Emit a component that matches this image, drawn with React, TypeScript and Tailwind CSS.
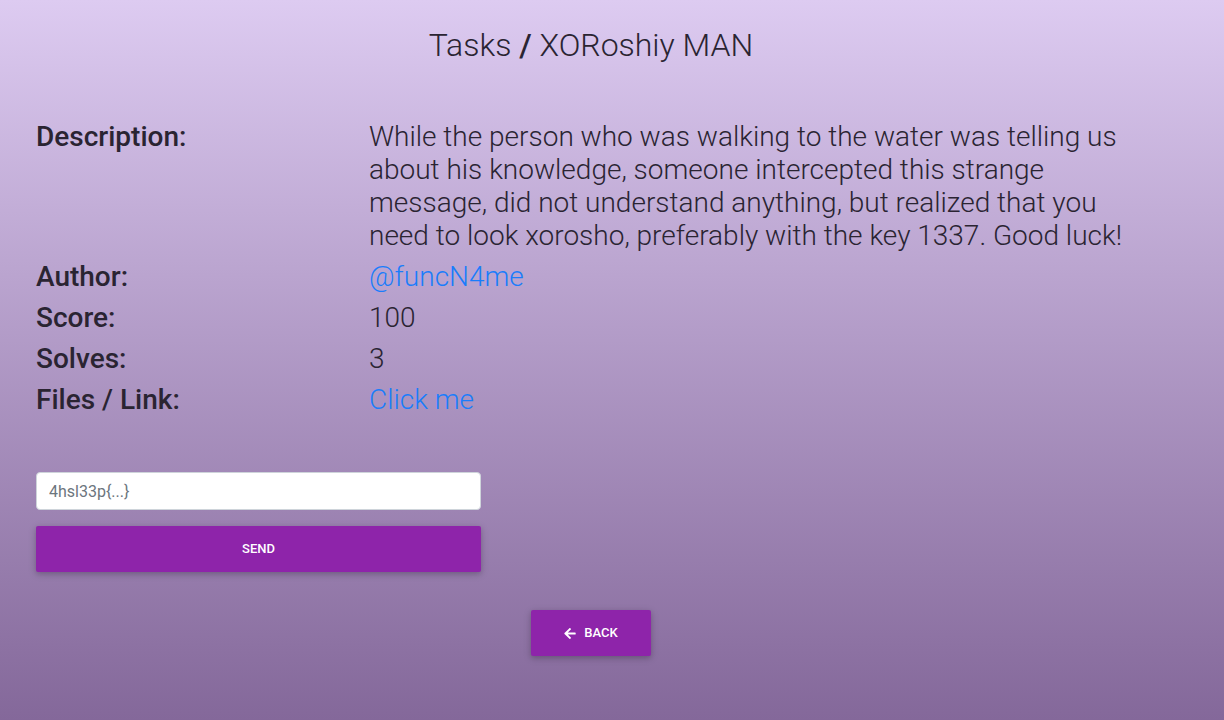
const rows = [
  { label: 'Author:', value: '@funcN4me', link: true },
  { label: 'Score:', value: '100' },
  { label: 'Solves:', value: '3' },
  { label: 'Files / Link:', value: 'Click me', link: true },
]

const btnShadow = 'shadow-[0_2px_5px_0_rgba(0,0,0,0.16),0_2px_10px_0_rgba(0,0,0,0.12)]'

function ArrowLeftSolid() {
  return (
    <svg viewBox="0 0 448 512" className="h-[13px] w-[12px]" fill="currentColor">
      <path d="M257.5 445.1l-22.2 22.2c-9.4 9.4-24.6 9.4-33.9 0L7 273c-9.4-9.4-9.4-24.6 0-33.9L201.4 44.7c9.4-9.4 24.6-9.4 33.9 0l22.2 22.2c9.5 9.5 9.3 25-.4 34.3L136.6 216H424c13.3 0 24 10.7 24 24v32c0 13.3-10.7 24-24 24H136.6l120.5 114.8c9.8 9.3 10 24.8.4 34.3z" />
    </svg>
  )
}

export default function App() {
  return (
    <div
      className="min-h-[720px] w-full bg-gradient-to-b from-[#ddcbf1] to-[#84689a] text-[#2a2432]"
      style={{ fontFamily: 'Roboto, "Liberation Sans", sans-serif' }}
    >
      <div className="ml-[36px] w-[1110px] pt-[24px] pb-[64px]">
        <h1 className="text-center text-[32px] font-light leading-[42px]">
          Tasks <span className="font-medium">/</span> XORoshiy MAN
        </h1>

        {/* task info */}
        <div className="mt-[54px] flex flex-col">
          <div className="mb-[8px] flex">
            <div className="w-[333px] shrink-0 text-[28px] font-medium leading-[33px]">Description:</div>
            <div className="w-[777px] text-[28px] font-light leading-[33px]">
              While the person who was walking to the water was telling us about his knowledge, someone
              intercepted this strange message, did not understand anything, but realized that you need to
              look xorosho, preferably with the key 1337. Good luck!
            </div>
          </div>
          {rows.map((r) => (
            <div key={r.label} className="mb-[8px] flex">
              <div className="w-[333px] shrink-0 text-[28px] font-medium leading-[33px]">{r.label}</div>
              <div
                className={
                  r.link
                    ? 'text-[28px] font-light leading-[33px] text-[#1a7dfb]'
                    : 'text-[28px] font-light leading-[33px]'
                }
              >
                {r.value}
              </div>
            </div>
          ))}
        </div>

        {/* flag form */}
        <div className="mt-[48px] flex w-[445px] flex-col">
          <input
            className="h-[38px] w-full rounded-[4px] border border-[#ced4da] bg-white px-[12px] text-[16px] text-[#495057] placeholder:text-[#6c757d] outline-none"
            placeholder="4hsl33p{...}"
          />
          <button className={`mt-[16px] h-[46px] w-full rounded-[2px] bg-[#8e24aa] text-[13px] font-medium uppercase text-white ${btnShadow}`}>
            Send
          </button>
        </div>

        <div className="mt-[38px] flex justify-center">
          <button className={`flex h-[46px] w-[120px] items-center justify-center gap-[8px] rounded-[2px] bg-[#8e24aa] text-[13px] font-medium uppercase text-white ${btnShadow}`}>
            <ArrowLeftSolid />
            Back
          </button>
        </div>
      </div>
    </div>
  )
}
